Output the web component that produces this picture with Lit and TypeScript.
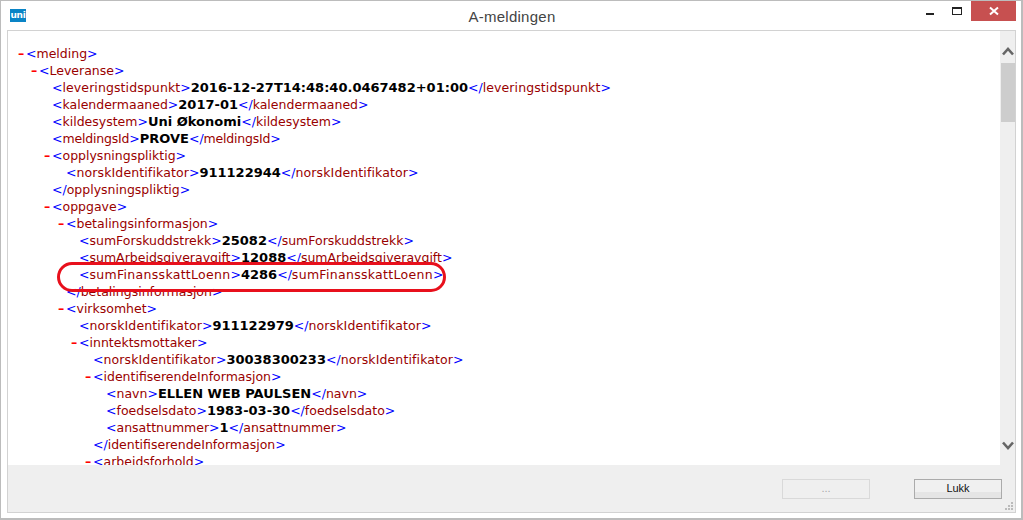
import { LitElement, html, css, svg } from "lit";
import { customElement } from "lit/decorators.js";

type Row = { level: number; tag: string; value?: string; close?: boolean; minus?: boolean };

const rows: Row[] = [
  { level: 0, tag: "melding", minus: true },
  { level: 1, tag: "Leveranse", minus: true },
  { level: 2, tag: "leveringstidspunkt", value: "2016-12-27T14:48:40.0467482+01:00" },
  { level: 2, tag: "kalendermaaned", value: "2017-01" },
  { level: 2, tag: "kildesystem", value: "Uni Økonomi" },
  { level: 2, tag: "meldingsId", value: "PROVE" },
  { level: 2, tag: "opplysningspliktig", minus: true },
  { level: 3, tag: "norskIdentifikator", value: "911122944" },
  { level: 2, tag: "opplysningspliktig", close: true },
  { level: 2, tag: "oppgave", minus: true },
  { level: 3, tag: "betalingsinformasjon", minus: true },
  { level: 4, tag: "sumForskuddstrekk", value: "25082" },
  { level: 4, tag: "sumArbeidsgiveravgift", value: "12088" },
  { level: 4, tag: "sumFinansskattLoenn", value: "4286" },
  { level: 3, tag: "betalingsinformasjon", close: true },
  { level: 3, tag: "virksomhet", minus: true },
  { level: 4, tag: "norskIdentifikator", value: "911122979" },
  { level: 4, tag: "inntektsmottaker", minus: true },
  { level: 5, tag: "norskIdentifikator", value: "30038300233" },
  { level: 5, tag: "identifiserendeInformasjon", minus: true },
  { level: 6, tag: "navn", value: "ELLEN WEB PAULSEN" },
  { level: 6, tag: "foedselsdato", value: "1983-03-30" },
  { level: 6, tag: "ansattnummer", value: "1" },
  { level: 5, tag: "identifiserendeInformasjon", close: true },
  { level: 5, tag: "arbeidsforhold", minus: true },
];

const tagSpacing: Record<string, number> = {
  sumFinansskattLoenn: 0.3,
  norskIdentifikator: 0.12,
  meldingsId: -0.2,
  leveringstidspunkt: 0.1,
};

@customElement("app-root")
export class AppRoot extends LitElement {
  static styles = css`
    :host {
      display: block;
      width: 1023px;
      height: 520px;
      font-family: "DejaVu Sans", Verdana, sans-serif;
    }
    .window {
      box-sizing: border-box;
      width: 1023px;
      height: 520px;
      background: #fff;
      border: 1px solid #bcbcbc;
      border-bottom-width: 2px;
      border-right-width: 2px;
      display: flex;
      flex-direction: column;
      position: relative;
    }
    .titlebar {
      height: 29px;
      flex: none;
      display: flex;
      align-items: flex-start;
      position: relative;
    }
    .logo {
      width: 16px;
      height: 13px;
      margin: 8px 0 0 9px;
      background: #0a84c6;
      color: #fff;
      font: bold 9px/12px "DejaVu Sans", sans-serif;
      text-align: center;
      letter-spacing: -0.3px;
    }
    .title {
      position: absolute;
      left: 2px;
      right: 0;
      top: 7px;
      text-align: center;
      font: 15px/17px "Liberation Sans", Arial, sans-serif;
      color: #444;
      letter-spacing: 0.25px;
    }
    .controls {
      margin-left: auto;
      display: flex;
      align-items: flex-start;
      margin-right: 5px;
    }
    .ctl {
      display: block;
    }
    .close {
      width: 45px;
      height: 20px;
      background: #c75050;
      display: flex;
      align-items: center;
      justify-content: center;
    }
    .body {
      flex: 1;
      min-height: 0;
      margin: 0 5px 5px 6px;
      border: 1px solid #d2d2d2;
      background: #efefef;
      display: flex;
      flex-direction: column;
      position: relative;
    }
    .main {
      flex: 1;
      min-height: 0;
      display: flex;
    }
    .tree {
      flex: 1;
      min-width: 0;
      background: #fff;
      overflow: hidden;
      padding-top: 14px;
      font-size: 12.5px;
      line-height: 17px;
      white-space: pre;
    }
    .row {
      height: 17px;
      display: flex;
      color: #990000;
    }
    .m {
      color: #f00;
      font-weight: bold;
      width: 10px;
      text-align: center;
      flex: none;
      margin-left: -10px;
    }
    .b { color: #0000ff; }
    .v { color: #000; font-weight: bold; font-size: 13px; }
    .scroll {
      width: 15px;
      flex: none;
      display: flex;
      flex-direction: column;
      background: #efefef;
      align-items: center;
    }
    .arrow { display: block; margin-top: 16px; flex: none; }
    .thumb {
      width: 14px;
      height: 59px;
      margin-top: 7px;
      background: #cdcdcd;
      flex: none;
    }
    .arrow.down { margin-top: auto; margin-bottom: 15px; }
    .footer {
      height: 47px;
      flex: none;
      display: flex;
      justify-content: flex-end;
      align-items: flex-start;
      gap: 44px;
      padding: 14px 13px 0 0;
      box-sizing: border-box;
      position: relative;
    }
    .btn {
      box-sizing: border-box;
      width: 88px;
      height: 20px;
      font: 11px/16px "Liberation Sans", Arial, sans-serif;
      text-align: center;
      border: 1px solid #ababab;
      background: linear-gradient(#f0f0f0 0 65%, #e5e5e5 65%);
      color: #111;
    }
    .btn.off {
      border-color: #d9d9d9;
      background: #efefef;
      color: #a8a8a8;
    }
    .grip {
      position: absolute;
      right: 1px;
      bottom: 1px;
      display: block;
    }
    .ring {
      position: absolute;
      left: 56px;
      top: 261px;
      display: block;
      pointer-events: none;
    }
  `;

  private renderRow(r: Row) {
    const indent = Math.floor(18 + r.level * 13.4);
    const ls = tagSpacing[r.tag] ?? 0;
    const name = html`<span style="letter-spacing:${ls}px">${r.tag}</span>`;
    return html`<div class="row" style="padding-left:${indent}px">${r.minus
        ? html`<span class="m">–</span>`
        : ""}<span class="b">${r.close ? "</" : "<"}</span>${name}<span class="b">&gt;</span>${r.value !== undefined
        ? html`<span class="v">${r.value}</span><span class="b">&lt;/</span>${name}<span class="b">&gt;</span>`
        : ""}</div>`;
  }

  render() {
    return html`
      <div class="window">
        <div class="titlebar">
          <div class="logo">uni</div>
          <div class="title">A-meldingen</div>
          <div class="controls">
            <svg class="ctl" width="73" height="20" viewBox="0 0 73 20">
              <rect x="28" y="12" width="8" height="2" fill="#222" />
              <rect x="54.5" y="6.5" width="9" height="7" fill="none" stroke="#222" />
              <rect x="54" y="6" width="10" height="2" fill="#222" />
            </svg>
            <div class="close">
              <svg width="10" height="10" viewBox="0 0 10 10">
                <path d="M1 1.5 L9 8.5 M9 1.5 L1 8.5" stroke="#fff" stroke-width="2" fill="none" />
              </svg>
            </div>
          </div>
        </div>
        <div class="body">
          <div class="main">
            <div class="tree">${rows.map((r) => this.renderRow(r))}</div>
            <div class="scroll">
              <svg class="arrow" width="12" height="9" viewBox="0 0 12 9">
                <path d="M1 7.5 L6 2 L11 7.5" stroke="#666" stroke-width="2.6" fill="none" />
              </svg>
              <div class="thumb"></div>
              <svg class="arrow down" width="12" height="9" viewBox="0 0 12 9">
                <path d="M1 1.5 L6 7 L11 1.5" stroke="#666" stroke-width="2.6" fill="none" />
              </svg>
            </div>
          </div>
          <div class="footer">
            <div class="btn off">...</div>
            <div class="btn">Lukk</div>
            <svg class="grip" width="9" height="9" viewBox="0 0 9 9" fill="#bbb">
              <rect x="6" y="0" width="2" height="2" />
              <rect x="3" y="3" width="2" height="2" />
              <rect x="6" y="3" width="2" height="2" />
              <rect x="0" y="6" width="2" height="2" />
              <rect x="3" y="6" width="2" height="2" />
              <rect x="6" y="6" width="2" height="2" />
            </svg>
          </div>
        </div>
        <svg class="ring" width="392" height="32" viewBox="0 0 392 32">
          ${svg`<rect x="1.5" y="1.5" width="386" height="27" rx="13.5" ry="13.5" fill="none" stroke="#e8101c" stroke-width="3" />`}
        </svg>
      </div>
    `;
  }
}
